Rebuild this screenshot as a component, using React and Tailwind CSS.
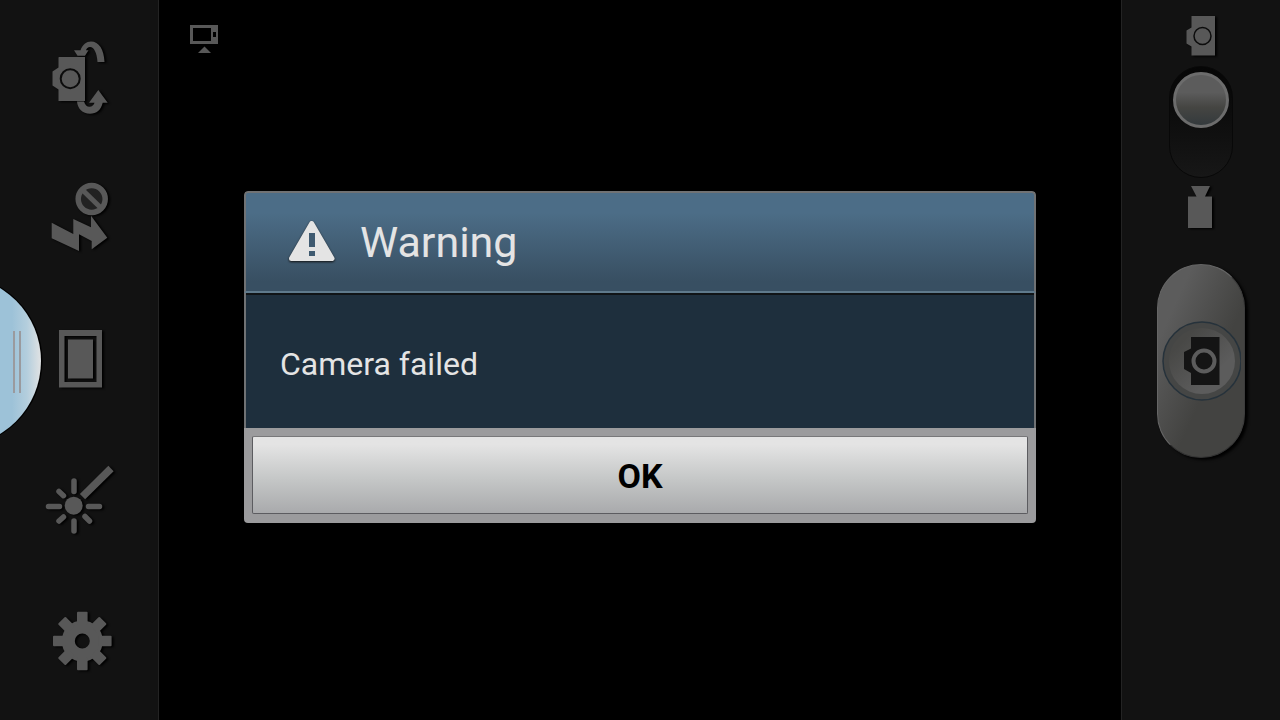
import React from 'react';

const Icon = ({ className, viewBox, children }) => (
  <svg
    className={`fill-[#585858] stroke-[#585858] drop-shadow-[2px_1px_1px_#000] ${className}`}
    viewBox={viewBox}
    strokeWidth="0"
    aria-hidden="true"
  >
    {children}
  </svg>
);

const SwitchCameraIcon = () => (
  <>
    <path d="M20 19H46V63H19.500V51.500L13.500 47.500V33.500L19.500 29.500V19.500Z" />
    <circle cx="31.200" cy="40.700" r="9.500" stroke="#0c0c0c" strokeWidth="2" />
    <path d="M65.500 24H58.500C58 15 55 9 51 9C49 9 47.500 10.500 47 12.300H49.500L46 17.700H38.500L35 12.300H41.500C43.500 6.500 47.500 3.500 52 3.500C60 3.500 65 11.500 65.500 24Z" />
    <path d="M38 63.500H45C46 67 48 68.700 50.500 68.700C53 68.700 55 67 55.500 64.700H50L59.300 52L68.700 64.700H63.700C62 72 57.500 75.700 51 75.700C43.500 75.700 38.500 70.500 38 63.500Z" />
  </>
);

const FlashOffIcon = () => (
  <>
    <circle cx="52.700" cy="20" r="13.500" fill="#222" strokeWidth="5.500" />
    <path d="M43 10.500L62.500 29.500" strokeWidth="5" />
    <path d="M12.700 43.700L34.300 55V40L52 48.300V36.700L68.300 58.700L52.700 70.300V62L40 55.300V72L12.700 59.300Z" />
  </>
);

const SingleShotIcon = () => (
  <>
    <path fillRule="evenodd" d="M20 10H63V67.500H20ZM25.500 16V62H57.500V16Z" />
    <path d="M29 19.500H54V58.500H29Z" />
  </>
);

const EffectsIcon = () => (
  <>
    <circle cx="34.700" cy="44.700" r="9" />
    <path
      strokeWidth="5.500"
      strokeLinecap="round"
      d="M35 20V30.500M35 60V70M9.500 45.500H20.500M49.500 45.500H60.500M20 30.500L24.500 34.700M20 60L24.500 56M46 55.500L50.500 60"
    />
    <path strokeWidth="7.500" d="M43.500 35.700L72 7.500" />
  </>
);

const SettingsIcon = () => (
  <>
    <circle cx="43.300" cy="39" r="14" fill="none" strokeWidth="13" />
    {[0, 45, 90, 135, 180, 225, 270, 315].map((angle) => (
      <rect
        key={angle}
        x="38"
        y="9.700"
        width="10.600"
        height="13"
        rx="1"
        transform={`rotate(${angle} 43.300 39)`}
      />
    ))}
  </>
);

const tools = [
  { label: 'Switch camera', Drawing: SwitchCameraIcon },
  { label: 'Flash off', Drawing: FlashOffIcon },
  { label: 'Shooting mode', Drawing: SingleShotIcon },
  { label: 'Effects', Drawing: EffectsIcon },
  { label: 'Settings', Drawing: SettingsIcon },
];

const DrawerHandle = () => (
  <button aria-label="Open shortcuts" className="absolute left-0 top-1/2 -translate-y-1/2">
    <svg className="block w-11 h-[150px]" viewBox="0 0 44 150" aria-hidden="true">
      <defs>
        <linearGradient id="handle" gradientUnits="userSpaceOnUse" x1="12" y1="0" x2="42" y2="0">
          <stop offset="0" stopColor="#9dc2d8" />
          <stop offset="0.500" stopColor="#b4cedd" />
          <stop offset="1" stopColor="#e4e4e4" />
        </linearGradient>
      </defs>
      <circle cx="-43.500" cy="76" r="86" fill="#000" />
      <circle cx="-44.500" cy="76" r="85.500" fill="url(#handle)" />
      <path d="M14 46V108M20 46V108" stroke="#9a9a9e" strokeWidth="2" />
    </svg>
  </button>
);

const Toolbar = () => (
  <aside className="relative w-[159px] shrink-0 bg-[#121212] border-r border-[#232323] pt-2 pb-[7px] flex flex-col">
    {tools.map(({ label, Drawing }) => (
      <button key={label} aria-label={label} className="flex-1 flex items-center justify-center">
        <Icon className="w-20 h-[81px]" viewBox="0 0 80 81">
          <Drawing />
        </Icon>
      </button>
    ))}
    <DrawerHandle />
  </aside>
);

const ShutterPanel = () => (
  <aside className="w-[159px] shrink-0 bg-[#121212] border-l border-[#232323] pt-4 flex flex-col items-center">
    <Icon className="w-8 h-10" viewBox="0 0 32 40">
      <path d="M6.500 0H30V39.500H6.500V30.500L1.500 27.500V14.500L6.500 11.500Z" />
      <circle cx="17.500" cy="20" r="8.500" stroke="#0c0c0c" strokeWidth="1.500" />
    </Icon>

    <button
      role="switch"
      aria-checked="false"
      aria-label="Video mode"
      className="mt-2.5 w-16 h-28 rounded-full bg-linear-to-b from-[#060606] to-[#171717] border border-[#080808] flex justify-center pt-[5px]"
    >
      <span className="size-14 rounded-full border-3 border-[#6c6c6c] bg-linear-to-b from-[#5c5c5c] from-35% via-[#454542] via-65% to-[#343a3d]" />
    </button>

    <Icon className="mt-2 w-7 h-[42px]" viewBox="0 0 28 42">
      <path d="M4 0H23L18 10.500H25V42H1V10.500H9.500Z" />
    </Icon>

    <button
      aria-label="Take picture"
      className="mt-9 w-[88px] h-[194px] rounded-full bg-linear-to-br from-[#5c5c5c] from-20% to-[#434341] to-60% border border-[#666] border-b-[#333] border-r-[#3c3c3c] shadow-[3px_2px_3px_#000] flex items-center justify-center"
    >
      <svg className="w-20 h-20" viewBox="0 0 80 80" aria-hidden="true">
        <defs>
          <linearGradient id="dish" x1="0" y1="0" x2="1" y2="1">
            <stop offset="0.200" stopColor="#484846" />
            <stop offset="0.700" stopColor="#5c5c5c" />
          </linearGradient>
        </defs>
        <circle cx="41" cy="40" r="39" fill="#454645" stroke="#26323b" strokeWidth="1.500" />
        <circle cx="41" cy="40" r="33" fill="url(#dish)" />
        <path d="M30 16H58.500V64H30V52L23 48V31L30 27.500Z" fill="#141414" />
        <circle cx="43" cy="40" r="10.500" fill="#141414" stroke="#5c5c5c" strokeWidth="4" />
      </svg>
    </button>
  </aside>
);

const WarningDialog = () => (
  <div
    role="alertdialog"
    aria-labelledby="dialog-title"
    aria-describedby="dialog-message"
    className="w-full rounded-sm overflow-hidden"
  >
    <header className="border-2 border-[#707274] border-b-[#5f7a8c] rounded-t-sm bg-linear-to-b from-[#4c6d87] from-20% to-[#384f62] to-90% h-[102px] pl-[42px] flex items-center gap-6">
      <svg className="w-12 h-11 drop-shadow-[0_1px_1px_#111]" viewBox="0 0 48 44" aria-hidden="true">
        <path
          d="M23.700 3.500L44 38.500H3.500Z"
          fill="#e4e4e4"
          stroke="#e4e4e4"
          strokeWidth="5"
          strokeLinejoin="round"
        />
        <path d="M21 13H27V27H21ZM21 31H27V36H21Z" fill="#3f5a70" />
      </svg>
      <h1 id="dialog-title" className="text-[43px] leading-[48px] text-[#e4e4e4]">
        Warning
      </h1>
    </header>

    <div className="border-x-2 border-[#707274] bg-[#1e2f3d]">
      <div className="border-t-2 border-[#101417] px-[34px] pt-[50px] pb-[45px]">
        <p id="dialog-message" className="text-[32px] leading-[38px] text-[#e4e4e4]">
          Camera failed
        </p>
      </div>
    </div>

    <footer className="bg-[#9b9b9d] px-2 pt-2 pb-[9px]">
      <button className="block w-full h-[78px] pt-0.5 rounded-xs border border-[#5c5c60] border-t-[#78787a] bg-linear-to-b from-[#e4e4e4] from-10% via-[#c5c7c7] via-55% to-[#a9aaac] text-[34px] leading-[40px] font-bold text-black">
        OK
      </button>
    </footer>
  </div>
);

const App = () => {
  return (
    <div className="min-h-screen bg-black flex font-[Roboto,sans-serif]">
      <Toolbar />

      {/* PREVIEW */}
      <main className="relative flex-1 pl-[31px] pt-[25px]">
        <svg className="w-7 h-7 fill-[#585858]" viewBox="0 0 28 28" aria-hidden="true">
          <path fillRule="evenodd" d="M0 0H28V19H0ZM3 3V16H21V3ZM23 7V12H26V7Z" />
          <path d="M14.500 21.500L21 28H8Z" />
        </svg>

        <div className="absolute inset-0 px-[85px] pb-[6px] flex items-center justify-center">
          <WarningDialog />
        </div>
      </main>

      <ShutterPanel />
    </div>
  );
};

export default App;
